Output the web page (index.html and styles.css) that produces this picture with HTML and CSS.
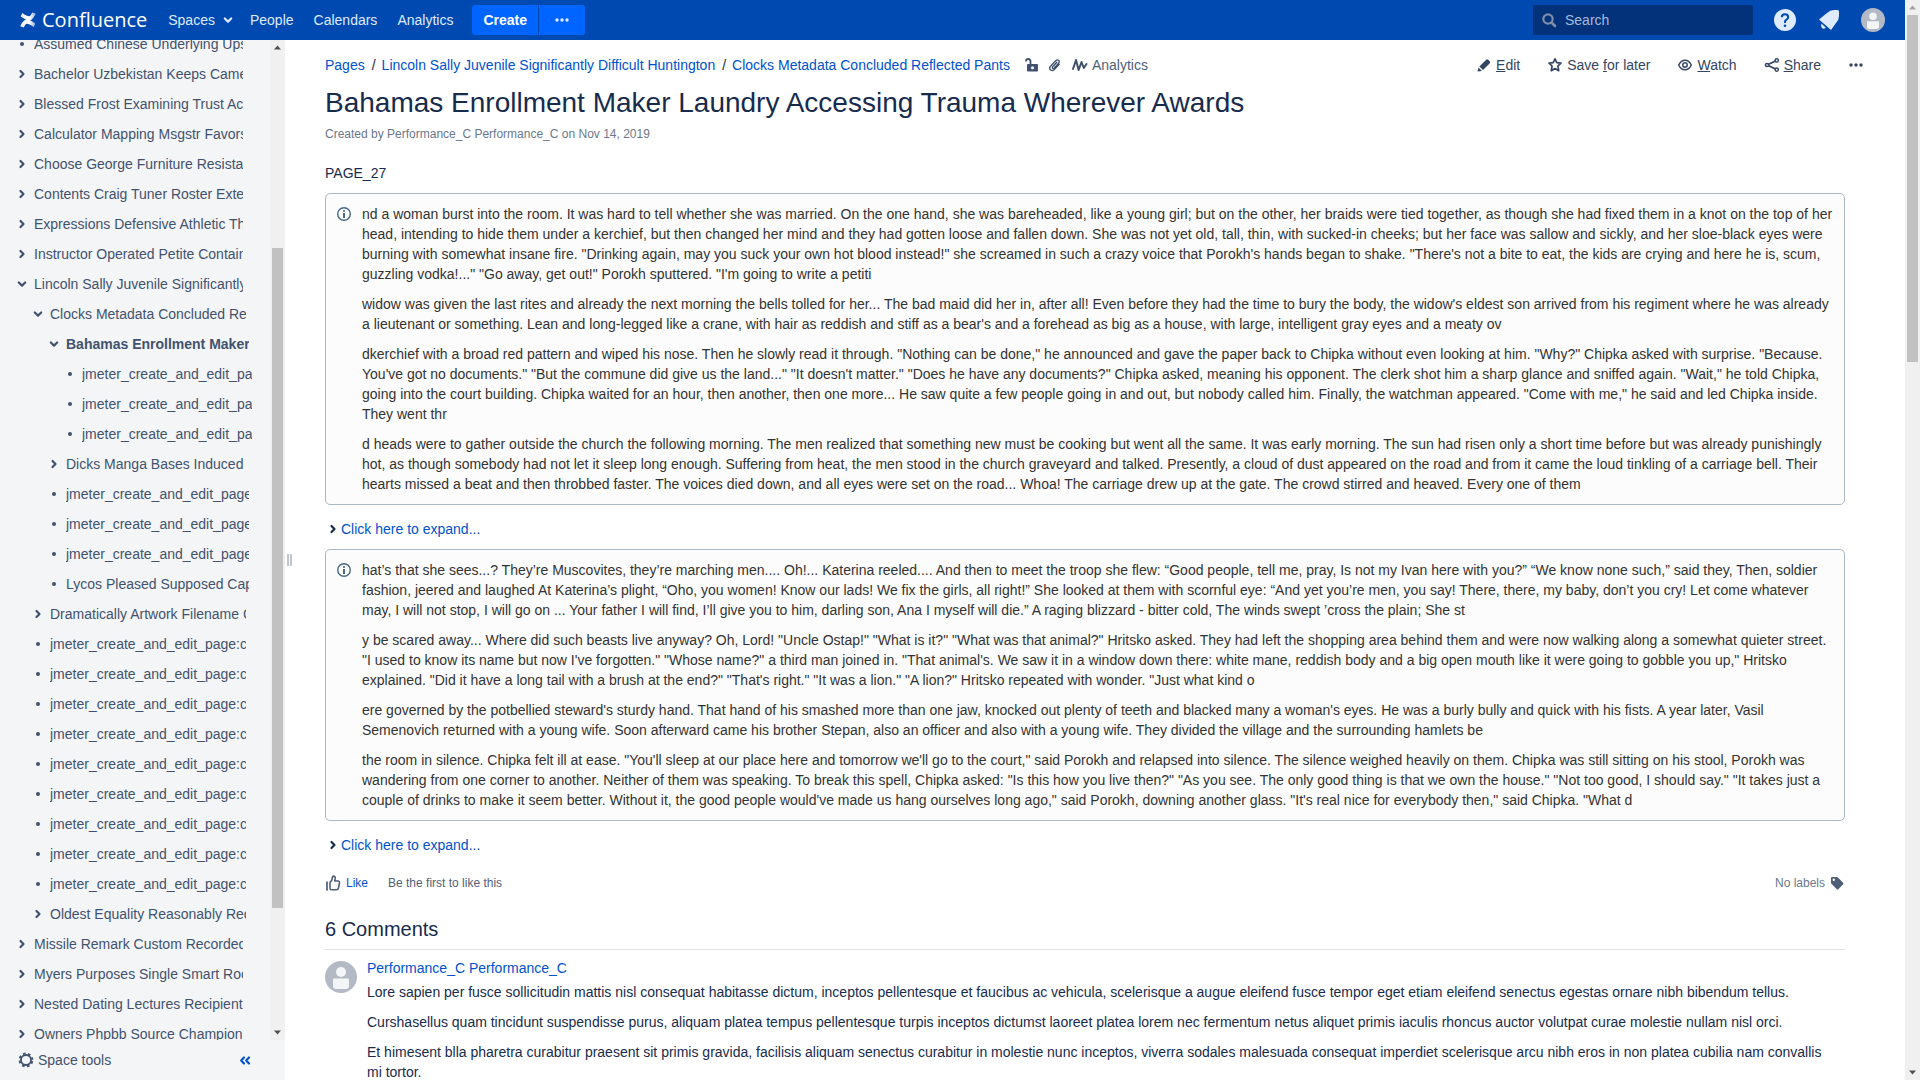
FILE: index.html
```html
<!DOCTYPE html>
<html lang="en">
<head>
<meta charset="utf-8">
<title>Bahamas Enrollment Maker Laundry Accessing Trauma Wherever Awards - Confluence</title>
<link rel="stylesheet" href="styles.css">
</head>
<body>
<svg class="sprite" aria-hidden="true">
  <symbol id="right" viewBox="0 0 16 16"><path d="M6.500 5 9.500 8l-3 3" fill="none" stroke="currentColor" stroke-width="2.200" stroke-linecap="round" stroke-linejoin="round"/></symbol>
  <symbol id="down" viewBox="0 0 16 16"><path d="M4.800 6.500 8 9.600l3.200-3.100" fill="none" stroke="currentColor" stroke-width="2.200" stroke-linecap="round" stroke-linejoin="round"/></symbol>
  <symbol id="dot" viewBox="0 0 16 16"><circle cx="8" cy="8" r="2" fill="currentColor"/></symbol>
  <symbol id="more" viewBox="0 0 16 16"><circle cx="3" cy="8" r="1.700" fill="currentColor"/><circle cx="8" cy="8" r="1.700" fill="currentColor"/><circle cx="13" cy="8" r="1.700" fill="currentColor"/></symbol>
  <symbol id="info" viewBox="0 0 16 16"><circle cx="8" cy="8" r="6.300" fill="none" stroke="currentColor" stroke-width="1.400"/><circle cx="8" cy="5" r="1.100" fill="currentColor"/><path d="M7 7h2v5H7z" fill="currentColor"/></symbol>
  <symbol id="user" viewBox="0 0 32 32"><circle cx="16" cy="16" r="16" fill="#b3bac5"/><circle cx="16" cy="11" r="5" fill="#f4f5f7"/><path d="M8 18.500q0-1 1-1h14q1 0 1 1V25q0 3-3 3H11q-3 0-3-3z" fill="#f4f5f7"/></symbol>
  <symbol id="up-arrow" viewBox="0 0 15 15"><path d="M4 9.500h7L7.500 5.500z" fill="currentColor"/></symbol>
  <symbol id="down-arrow" viewBox="0 0 15 15"><path d="M4 5.500h7L7.500 9.500z" fill="currentColor"/></symbol>
</svg>

<div class="page">
  <header class="header">
    <a class="logo" href="#" aria-label="Confluence">
      <svg viewBox="0 0 16 16" width="16" height="16">
        <defs><linearGradient id="fade" x1="0" x2="1" y1="0" y2="0"><stop offset="0" stop-color="#fff" stop-opacity=".9"/><stop offset=".6" stop-color="#fff"/><stop offset="1" stop-color="#fff" stop-opacity=".55"/></linearGradient></defs>
        <path d="M2.200 1 .7 4.600q3.300 2.200 6.300 3.600 2.700.8 4.600-.5 2.200-1.600 4.200-5.900L12.200.6q-1.300 3-2.600 3.600Q8 4.800 2.200 1z" fill="url(#fade)"/>
        <path d="M13.800 15l1.500-3.600q-3.300-2.200-6.300-3.600-2.700-.8-4.600.5Q2.200 9.900.2 14.200l3.600 1.200q1.300-3 2.600-3.600 1.600-.6 7.400 3.200z" fill="url(#fade)"/>
      </svg>
      <span>Confluence</span>
    </a>
    <nav class="nav">
      <a href="#">Spaces <svg class="icon"><use href="#down"/></svg></a>
      <a href="#">People</a>
      <a href="#">Calendars</a>
      <a href="#">Analytics</a>
    </nav>
    <div class="create">
      <button type="button">Create</button>
      <button type="button" class="create-more" aria-label="Create from template"><svg class="icon"><use href="#more"/></svg></button>
    </div>
    <label class="search">
      <svg class="icon" viewBox="0 0 16 16"><circle cx="7" cy="7" r="4.700" fill="none" stroke="currentColor" stroke-width="2.200"/><path d="M10.500 10.500 14 14" stroke="currentColor" stroke-width="2.600" stroke-linecap="round"/></svg>
      <input type="search" placeholder="Search" aria-label="Search">
    </label>
    <div class="tools">
      <button type="button" aria-label="Help"><svg viewBox="0 0 24 24"><circle cx="12" cy="12" r="11" fill="currentColor"/><path d="M8.800 9.300q0-3 3.200-3t3.200 2.900q0 1.500-1.700 2.400-1.500.8-1.500 2.400v1" fill="none" stroke="#0049b0" stroke-width="2"/><circle cx="12" cy="17.800" r="1.300" fill="#0049b0"/></svg></button>
      <button type="button" aria-label="Notifications"><svg viewBox="0 0 24 24"><path d="M2 11.500 10 5q3-3 7-3h3.500q1.500 0 1.500 1.500V8q0 4-3 7l-5 7z" fill="currentColor"/><path d="M4.500 15.500l4.300 4.300q-2.200 1.700-3.800.1-1.600-1.900-.5-4.400z" fill="currentColor"/></svg></button>
      <button type="button" aria-label="Profile"><svg><use href="#user"/></svg></button>
    </div>
  </header>

  <div class="columns">
    <aside class="sidebar">
      <div class="tree-pane">
        <ul class="tree">
          <li><a href="#"><svg class="icon"><use href="#dot"/></svg><span>Assumed Chinese Underlying Ups</span></a></li>
          <li><a href="#"><svg class="icon"><use href="#right"/></svg><span>Bachelor Uzbekistan Keeps Came</span></a></li>
          <li><a href="#"><svg class="icon"><use href="#right"/></svg><span>Blessed Frost Examining Trust Ac</span></a></li>
          <li><a href="#"><svg class="icon"><use href="#right"/></svg><span>Calculator Mapping Msgstr Favors</span></a></li>
          <li><a href="#"><svg class="icon"><use href="#right"/></svg><span>Choose George Furniture Resista</span></a></li>
          <li><a href="#"><svg class="icon"><use href="#right"/></svg><span>Contents Craig Tuner Roster Exte</span></a></li>
          <li><a href="#"><svg class="icon"><use href="#right"/></svg><span>Expressions Defensive Athletic Th</span></a></li>
          <li><a href="#"><svg class="icon"><use href="#right"/></svg><span>Instructor Operated Petite Contain</span></a></li>
          <li><a href="#"><svg class="icon"><use href="#down"/></svg><span>Lincoln Sally Juvenile Significantly</span></a>
            <ul>
              <li><a href="#"><svg class="icon"><use href="#down"/></svg><span>Clocks Metadata Concluded Re</span></a>
                <ul>
                  <li><a href="#" class="current"><svg class="icon"><use href="#down"/></svg><span>Bahamas Enrollment Maker</span></a>
                    <ul>
                      <li><a href="#"><svg class="icon"><use href="#dot"/></svg><span>jmeter_create_and_edit_pa</span></a></li>
                      <li><a href="#"><svg class="icon"><use href="#dot"/></svg><span>jmeter_create_and_edit_pa</span></a></li>
                      <li><a href="#"><svg class="icon"><use href="#dot"/></svg><span>jmeter_create_and_edit_pa</span></a></li>
                    </ul>
                  </li>
                  <li><a href="#"><svg class="icon"><use href="#right"/></svg><span>Dicks Manga Bases Induced</span></a></li>
                  <li><a href="#"><svg class="icon"><use href="#dot"/></svg><span>jmeter_create_and_edit_page</span></a></li>
                  <li><a href="#"><svg class="icon"><use href="#dot"/></svg><span>jmeter_create_and_edit_page</span></a></li>
                  <li><a href="#"><svg class="icon"><use href="#dot"/></svg><span>jmeter_create_and_edit_page</span></a></li>
                  <li><a href="#"><svg class="icon"><use href="#dot"/></svg><span>Lycos Pleased Supposed Cap</span></a></li>
                </ul>
              </li>
              <li><a href="#"><svg class="icon"><use href="#right"/></svg><span>Dramatically Artwork Filename C</span></a></li>
              <li><a href="#"><svg class="icon"><use href="#dot"/></svg><span>jmeter_create_and_edit_page:c</span></a></li>
              <li><a href="#"><svg class="icon"><use href="#dot"/></svg><span>jmeter_create_and_edit_page:c</span></a></li>
              <li><a href="#"><svg class="icon"><use href="#dot"/></svg><span>jmeter_create_and_edit_page:c</span></a></li>
              <li><a href="#"><svg class="icon"><use href="#dot"/></svg><span>jmeter_create_and_edit_page:c</span></a></li>
              <li><a href="#"><svg class="icon"><use href="#dot"/></svg><span>jmeter_create_and_edit_page:c</span></a></li>
              <li><a href="#"><svg class="icon"><use href="#dot"/></svg><span>jmeter_create_and_edit_page:c</span></a></li>
              <li><a href="#"><svg class="icon"><use href="#dot"/></svg><span>jmeter_create_and_edit_page:c</span></a></li>
              <li><a href="#"><svg class="icon"><use href="#dot"/></svg><span>jmeter_create_and_edit_page:c</span></a></li>
              <li><a href="#"><svg class="icon"><use href="#dot"/></svg><span>jmeter_create_and_edit_page:c</span></a></li>
              <li><a href="#"><svg class="icon"><use href="#right"/></svg><span>Oldest Equality Reasonably Rec</span></a></li>
            </ul>
          </li>
          <li><a href="#"><svg class="icon"><use href="#right"/></svg><span>Missile Remark Custom Recorded</span></a></li>
          <li><a href="#"><svg class="icon"><use href="#right"/></svg><span>Myers Purposes Single Smart Roo</span></a></li>
          <li><a href="#"><svg class="icon"><use href="#right"/></svg><span>Nested Dating Lectures Recipient</span></a></li>
          <li><a href="#"><svg class="icon"><use href="#right"/></svg><span>Owners Phpbb Source Champion</span></a></li>
        </ul>
        <div class="scrollbar tree-scroll">
          <svg><use href="#up-arrow"/></svg>
          <div class="track"><div class="thumb"></div></div>
          <svg><use href="#down-arrow"/></svg>
        </div>
      </div>
      <div class="side-foot">
        <button type="button"><svg class="icon" viewBox="0 0 16 16"><circle cx="8" cy="8" r="5" fill="none" stroke="currentColor" stroke-width="1.800"/><circle cx="8" cy="8" r="6.400" fill="none" stroke="currentColor" stroke-width="2" stroke-dasharray="2.600 2.427" stroke-dashoffset="-1.200"/></svg>Space tools</button>
        <button type="button" class="collapse" aria-label="Collapse sidebar"><svg class="icon" viewBox="0 0 16 16"><path d="M7 5.500 4.200 8.500l2.800 3M12 5.500 9.200 8.500l2.800 3" fill="none" stroke="currentColor" stroke-width="2.200" stroke-linecap="round" stroke-linejoin="round"/></svg></button>
      </div>
    </aside>
    <div class="splitter"><span></span><span></span></div>

    <main class="main">
      <div class="topline">
        <ol class="crumbs">
          <li><a href="#">Pages</a></li>
          <li><a href="#">Lincoln Sally Juvenile Significantly Difficult Huntington</a></li>
          <li><a href="#">Clocks Metadata Concluded Reflected Pants</a></li>
        </ol>
        <div class="meta">
          <button type="button" aria-label="Restrictions"><svg class="icon" viewBox="0 0 16 16"><path d="M6.500 8V4.500q0-2.500-2.300-2.500T2 4.500" fill="none" stroke="currentColor" stroke-width="1.800"/><path fill-rule="evenodd" d="M4 7h9q1 0 1 1v5.500q0 1-1 1H4q-1 0-1-1V8q0-1 1-1zm4.500 2.200a1.500 1.500 0 1 0 0 3 1.500 1.500 0 0 0 0-3z" fill="currentColor"/></svg></button>
          <button type="button" aria-label="Attachments"><svg class="icon" viewBox="0 0 16 16"><path d="M10.800 5.300 6.500 10q-.6.900.1 1.400.7.400 1.400-.3l4.600-5q1.300-1.700 0-2.800-1.400-1-2.900.4l-5.200 5.500q-1.700 2.200 0 3.900 1.900 1.400 3.900-.6l4.800-5.200" fill="none" stroke="currentColor" stroke-width="1.300" stroke-linecap="round"/></svg></button>
          <a class="analytics" href="#"><svg class="icon" viewBox="0 0 16 16"><path d="M1 12 4 3l2.600 10L9.500 5l2.300 6L14.500 7" fill="none" stroke="currentColor" stroke-width="2" stroke-linecap="round" stroke-linejoin="round"/></svg>Analytics</a>
        </div>
        <div class="actions">
          <a href="#"><svg class="icon" viewBox="0 0 16 16"><path d="M1.500 14.500l1-4L6 14zM3.400 9.500 10 2.900q1.200-1.200 2.400 0l1.200 1.200q1.200 1.200 0 2.400L7 13.100z" fill="currentColor"/></svg><span><u>E</u>dit</span></a>
          <a href="#"><svg class="icon" viewBox="0 0 16 16"><path d="M8 1.800 9.800 5.600l4.200.5-3.100 2.900.8 4.700L8 11.500l-3.700 2.200.8-4.700L2 6.100l4.200-.5z" fill="none" stroke="currentColor" stroke-width="1.700" stroke-linejoin="round"/></svg><span>Save <u>f</u>or later</span></a>
          <a href="#"><svg class="icon" viewBox="0 0 16 16"><path d="M1.700 8Q4 3.200 8 3.200T14.300 8Q12 12.800 8 12.800T1.700 8z" fill="none" stroke="currentColor" stroke-width="1.500"/><circle cx="8" cy="8" r="2.200" fill="none" stroke="currentColor" stroke-width="1.500"/></svg><span><u>W</u>atch</span></a>
          <a href="#"><svg class="icon" viewBox="0 0 16 16"><path d="M12.600 3.500 3 8l9.600 4.500" fill="none" stroke="currentColor" stroke-width="1.700"/><g fill="#fff" stroke="currentColor" stroke-width="1.500"><circle cx="12.700" cy="3.400" r="1.600"/><circle cx="3" cy="8" r="1.600"/><circle cx="12.700" cy="12.600" r="1.600"/></g></svg><span><u>S</u>hare</span></a>
          <button type="button" aria-label="More actions"><svg class="icon"><use href="#more"/></svg></button>
        </div>
      </div>

      <div class="content">
        <h1>Bahamas Enrollment Maker Laundry Accessing Trauma Wherever Awards</h1>
        <p class="byline">Created by <a href="#">Performance_C Performance_C</a> on <a href="#">Nov 14, 2019</a></p>
        <p class="intro">PAGE_27</p>

        <section class="panel">
          <svg class="icon"><use href="#info"/></svg>
          <div class="panel-text">
            <p>nd a woman burst into the room. It was hard to tell whether she was married. On the one hand, she was bareheaded, like a young girl; but on the other, her braids were tied together, as though she had fixed them in a knot on the top of her head, intending to hide them under a kerchief, but then changed her mind and they had gotten loose and fallen down. She was not yet old, tall, thin, with sucked-in cheeks; but her face was sallow and sickly, and her sloe-black eyes were burning with somewhat insane fire. "Drinking again, may you suck your own hot blood instead!" she screamed in such a crazy voice that Porokh's hands began to shake. "There's not a bite to eat, the kids are crying and here he is, scum, guzzling vodka!..." "Go away, get out!" Porokh sputtered. "I'm going to write a petiti</p>
            <p>widow was given the last rites and already the next morning the bells tolled for her... The bad maid did her in, after all! Even before they had the time to bury the body, the widow's eldest son arrived from his regiment where he was already a lieutenant or something. Lean and long-legged like a crane, with hair as reddish and stiff as a bear's and a forehead as big as a house, with large, intelligent gray eyes and a meaty ov</p>
            <p>dkerchief with a broad red pattern and wiped his nose. Then he slowly read it through. "Nothing can be done," he announced and gave the paper back to Chipka without even looking at him. "Why?" Chipka asked with surprise. "Because. You've got no documents." "But the commune did give us the land..." "It doesn't matter." "Does he have any documents?" Chipka asked, meaning his opponent. The clerk shot him a sharp glance and sniffed again. "Wait," he told Chipka, going into the court building. Chipka waited for an hour, then another, then one more... He saw quite a few people going in and out, but nobody called him. Finally, the watchman appeared. "Come with me," he said and led Chipka inside. They went thr</p>
            <p>d heads were to gather outside the church the following morning. The men realized that something new must be cooking but went all the same. It was early morning. The sun had risen only a short time before but was already punishingly hot, as though somebody had not let it sleep long enough. Suffering from heat, the men stood in the church graveyard and talked. Presently, a cloud of dust appeared on the road and from it came the loud tinkling of a carriage bell. Their hearts missed a beat and then throbbed faster. The voices died down, and all eyes were set on the road... Whoa! The carriage drew up at the gate. The crowd stirred and heaved. Every one of them</p>
          </div>
        </section>
        <button type="button" class="expand"><svg class="icon"><use href="#right"/></svg>Click here to expand...</button>

        <section class="panel">
          <svg class="icon"><use href="#info"/></svg>
          <div class="panel-text">
            <p>hat’s that she sees...? They’re Muscovites, they’re marching men.... Oh!... Katerina reeled.... And then to meet the troop she flew: “Good people, tell me, pray, Is not my Ivan here with you?” “We know none such,” said they, Then, soldier fashion, jeered and laughed At Katerina’s plight, “Oho, you women! Know our lads! We fix the girls, all right!” She looked at them with scornful eye: “And yet you’re men, you say! There, there, my baby, don’t you cry! Let come whatever may, I will not stop, I will go on ... Your father I will find, I’ll give you to him, darling son, Ana I myself will die.” A raging blizzard - bitter cold, The winds swept ’cross the plain; She st</p>
            <p>y be scared away... Where did such beasts live anyway? Oh, Lord! "Uncle Ostap!" "What is it?" "What was that animal?" Hritsko asked. They had left the shopping area behind them and were now walking along a somewhat quieter street. "I used to know its name but now I've forgotten." "Whose name?" a third man joined in. "That animal's. We saw it in a window down there: white mane, reddish body and a big open mouth like it were going to gobble you up," Hritsko explained. "Did it have a long tail with a brush at the end?" "That's right." "It was a lion." "A lion?" Hritsko repeated with wonder. "Just what kind o</p>
            <p>ere governed by the potbellied steward's sturdy hand. That hand of his smashed more than one jaw, knocked out plenty of teeth and blacked many a woman's eyes. He was a burly bully and quick with his fists. A year later, Vasil Semenovich returned with a young wife. Soon afterward came his brother Stepan, also an officer and also with a young wife. They divided the village and the surrounding hamlets be</p>
            <p>the room in silence. Chipka felt ill at ease. "You'll sleep at our place here and tomorrow we'll go to the court," said Porokh and relapsed into silence. The silence weighed heavily on them. Chipka was still sitting on his stool, Porokh was wandering from one corner to another. Neither of them was speaking. To break this spell, Chipka asked: "Is this how you live then?" "As you see. The only good thing is that we own the house." "Not too good, I should say." "It takes just a couple of drinks to make it seem better. Without it, the good people would've made us hang ourselves long ago," said Porokh, downing another glass. "It's real nice for everybody then," said Chipka. "What d</p>
          </div>
        </section>
        <button type="button" class="expand"><svg class="icon"><use href="#right"/></svg>Click here to expand...</button>

        <div class="likes">
          <button type="button" class="like"><svg class="icon" viewBox="0 0 16 16"><path d="M2 7v8" stroke="#505f79" stroke-width="1.700" stroke-linecap="round"/><path d="M5 7.500 7 4.800l.4-2.700q.3-1.100 1.400-1 1.700.4 1.400 2.600L9.800 6h3.400q1.500.2 1.300 1.700l-1 5.300q-.4 1.700-1.900 1.700H6.500Q5 14.700 5 13.200z" fill="none" stroke="#505f79" stroke-width="1.600" stroke-linejoin="round"/></svg>Like</button>
          <span>Be the first to like this</span>
          <span class="labels">No labels <button type="button" aria-label="Edit labels"><svg class="icon" viewBox="0 0 16 16"><path fill-rule="evenodd" d="M3 2h4.500q.8 0 1.400.6l5 5q1 1 0 2l-4.300 4.300q-1 1-2 0L2.600 8.900Q2 8.300 2 7.500V3q0-1 1-1zm1.800 1.600a1.200 1.200 0 1 0 0 2.400 1.200 1.200 0 0 0 0-2.400z" fill="currentColor"/></svg></button></span>
        </div>

        <h2>6 Comments</h2>
        <article class="comment">
          <svg class="avatar"><use href="#user"/></svg>
          <div class="comment-text">
            <a href="#">Performance_C Performance_C</a>
            <p>Lore sapien per fusce sollicitudin mattis nisl consequat habitasse dictum, inceptos pellentesque et faucibus ac vehicula, scelerisque a augue eleifend fusce tempor eget etiam eleifend senectus egestas ornare nibh bibendum tellus.</p>
            <p>Curshasellus quam tincidunt suspendisse purus, aliquam platea tempus pellentesque turpis inceptos dictumst laoreet platea lorem nec fermentum netus aliquet primis iaculis rhoncus auctor volutpat curae molestie nullam nisl orci.</p>
            <p>Et himesent blla pharetra curabitur praesent sit primis gravida, facilisis aliquam senectus curabitur in molestie nunc inceptos, viverra sodales malesuada consequat imperdiet scelerisque arcu nibh eros in non platea cubilia nam convallis mi tortor.</p>
          </div>
        </article>
      </div>
    </main>
  </div>
</div>
<div class="scrollbar page-scroll">
  <svg class="at-end"><use href="#up-arrow"/></svg>
  <div class="track"><div class="thumb"></div></div>
  <svg><use href="#down-arrow"/></svg>
</div>
</body>
</html>
```
FILE: styles.css
```css
* { box-sizing: border-box; }
body {
  margin: 0;
  height: 100vh;
  display: flex;
  overflow: hidden;
  background: #fff;
  color: #172b4d;
  font: 14px/20px "Liberation Sans", Arial, sans-serif;
}
a { color: #0052cc; text-decoration: none; }
p, h1, h2, ul, ol { margin: 0; padding: 0; }
ul, ol { list-style: none; }
button { border: 0; padding: 0; margin: 0; background: none; font: inherit; color: inherit; display: inline-flex; align-items: center; }
.icon { width: 16px; height: 16px; flex: none; display: block; }
.sprite { position: absolute; width: 0; height: 0; }

.page { flex: 1; min-width: 0; display: flex; flex-direction: column; }
.columns { flex: 1; min-height: 0; display: flex; }

/* Header */
.header { height: 40px; flex: none; display: flex; align-items: center; padding: 0 20px; background: #0049b0; color: #deebff; }
.logo { display: flex; align-items: center; gap: 6px; color: #fff; font: 20px/24px "Open Sans", "Noto Sans", sans-serif; }
.nav { display: flex; gap: 20px; margin-left: 21px; }
.nav a { color: #deebff; display: flex; align-items: center; gap: 5px; }
.nav a:first-child { margin-right: -6px; }
.create { display: flex; gap: 1px; margin-left: 19px; }
.create button { height: 30px; padding: 0 11px; background: #0065ff; color: #fff; font-weight: bold; border-radius: 3px 0 0 3px; }
.create .create-more { padding: 0 15px; border-radius: 0 3px 3px 0; color: #deebff; }
.search { display: flex; align-items: center; gap: 8px; width: 220px; height: 30px; margin-left: auto; padding: 0 8px; border-radius: 3px; background: #03317a; color: #7d8ca8; }
.search input { flex: 1; min-width: 0; border: 0; padding: 0; background: none; color: #b3c5e4; font: inherit; outline: 0; }
.search input::placeholder { color: #a5bbdf; opacity: 1; }
.tools { display: flex; gap: 20px; margin-left: 20px; }
.tools svg { width: 24px; height: 24px; }

/* Sidebar */
.sidebar { width: 285px; flex: none; display: flex; flex-direction: column; background: #f4f5f7; color: #42526e; }
.tree-pane { flex: 1; min-height: 0; display: flex; overflow: hidden; }
.tree { flex: 1; min-width: 0; margin-top: -11px; padding: 0 27px 0 14px; }
.tree ul { margin-right: -3px; padding-left: 16px; }
.tree a { display: flex; align-items: center; gap: 4px; height: 30px; color: #42526e; }
.tree span { flex: 1; min-width: 0; overflow: hidden; white-space: nowrap; }
.tree .current { font-weight: bold; }
.side-foot { height: 40px; flex: none; display: flex; align-items: center; justify-content: space-between; padding: 0 32px 0 18px; }
.side-foot button { gap: 4px; }
.side-foot .collapse { color: #0052cc; }
.splitter { width: 10px; flex: none; display: flex; align-items: center; gap: 1px; padding-left: 2px; }
.splitter span { width: 2px; height: 12px; background: #c1c7d0; }

/* Scrollbars */
.scrollbar { width: 15px; flex: none; display: flex; flex-direction: column; background: #f0f0f0; color: #505050; }
.scrollbar svg { width: 15px; height: 15px; flex: none; display: block; }
.scrollbar .at-end { color: #a3a3a3; }
.track { flex: 1; padding: 0 2px; }
.thumb { background: #c1c1c1; }
.tree-scroll .track { display: grid; grid-template-rows: 193fr 660fr 117fr; }
.tree-scroll .thumb { grid-row: 2; }
.page-scroll .thumb { height: 33%; }

/* Page */
.main { flex: 1; min-width: 0; overflow: hidden; padding: 15px 0 0 30px; }
.topline { display: flex; align-items: center; padding-right: 41px; }
.crumbs { display: flex; white-space: nowrap; }
.crumbs li + li::before { content: "/"; margin: 0 6px 0 7px; }
.meta { display: flex; gap: 6px; margin-left: 14px; color: #42526e; }
.meta .analytics { display: flex; align-items: center; gap: 4px; margin-left: 4px; color: #505f79; }
.analytics .icon { color: #42526e; }
.actions { display: flex; gap: 27px; margin-left: auto; color: #344563; white-space: nowrap; }
.actions a { display: flex; align-items: center; gap: 4px; color: #344563; }
.content { padding-right: 60px; }
h1 { margin-top: 12px; font-size: 28px; line-height: 32px; font-weight: normal; }
.byline { margin-top: 5px; font-size: 12px; color: #6b778c; }
.byline a { color: #6b778c; }
.intro { margin: 19px 0 10px; }
.panel { display: flex; gap: 10px; padding: 10px; border: 1px solid #aab8c6; border-radius: 5px; background: #fcfcfc; color: #333; }
.panel .icon { margin-top: 2px; color: #4a6785; }
.panel-text { flex: 1; min-width: 0; }
.panel-text p + p, .comment-text p + p { margin-top: 10px; }
.expand { display: flex; margin: 14px 0 10px; color: #0052cc; }
.expand .icon { color: #172b4d; }
.likes { display: flex; align-items: center; margin-top: 18px; font-size: 12px; color: #505f79; }
.like { gap: 5px; margin-right: 20px; color: #0052cc; }
.labels { display: flex; align-items: center; gap: 4px; margin-left: auto; color: #6b778c; }
.labels button { color: #505f79; }
h2 { margin-top: 24px; padding-bottom: 8px; border-bottom: 1px solid #dfe1e6; font-size: 20px; line-height: 24px; font-weight: normal; }
.comment { display: flex; gap: 10px; padding: 8px 10px 0 0; }
.avatar { width: 32px; height: 32px; flex: none; margin-top: 3px; }
.comment-text { flex: 1; min-width: 0; }
.comment-text a { display: block; margin-bottom: 4px; }
```
